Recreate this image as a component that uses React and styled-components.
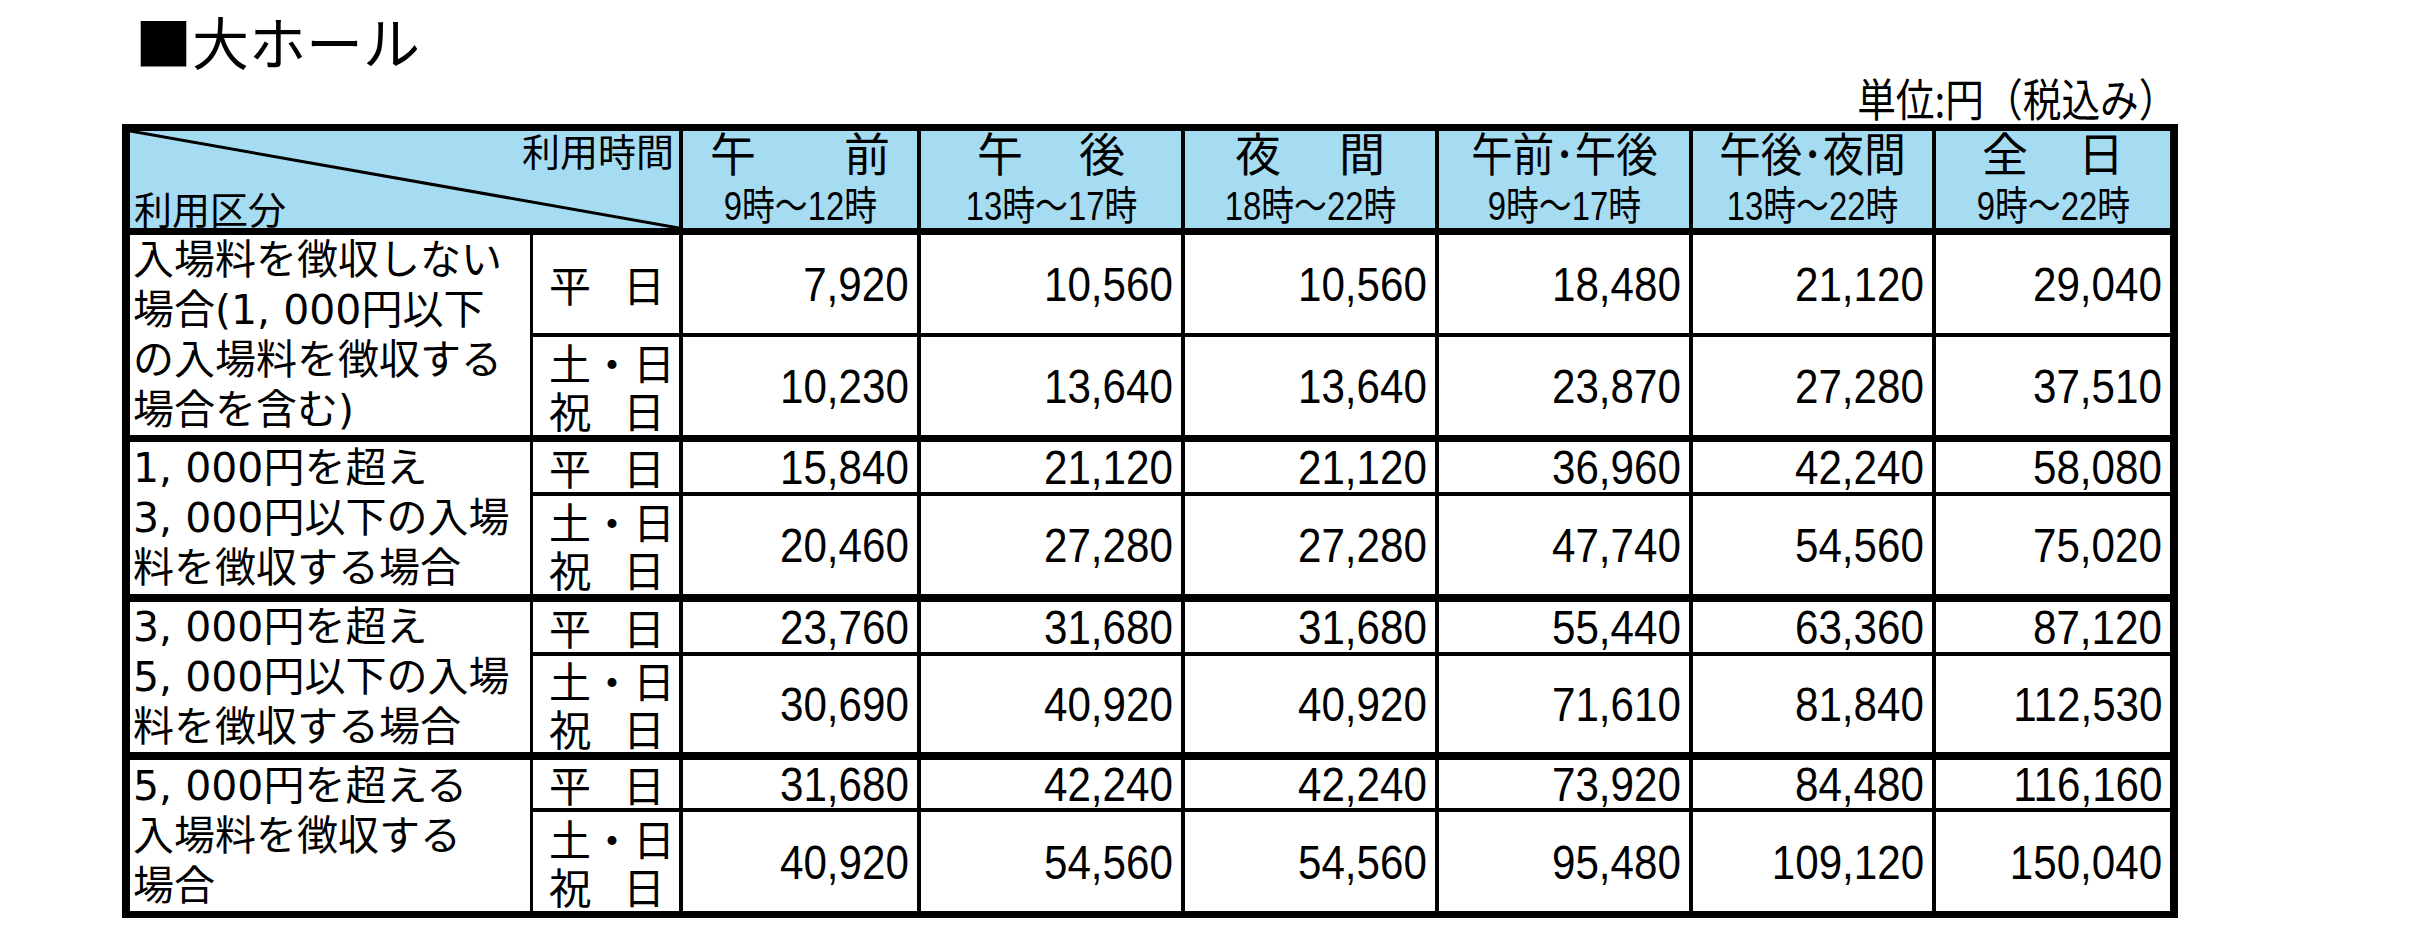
import React from "react";
import styled, { createGlobalStyle } from "styled-components";

const GlobalStyle = createGlobalStyle`
  html, body {
    margin: 0;
    padding: 0;
    background: #fff;
  }
  body {
    font-family: "Noto Sans CJK JP", "Noto Sans", sans-serif;
    color: #000;
  }
`;

const BLUE = "#a5dcf2";

const columns = [
  { w: 238, t1: ["午", "前"], pad: 27, t2: "9時～12時" },
  { w: 264, t1: ["午", "後"], pad: 56, t2: "13時～17時" },
  { w: 254, t1: ["夜", "間"], pad: 50, t2: "18時～22時" },
  { w: 254, t1: "午前･午後", t2: "9時～17時" },
  { w: 243, t1: "午後･夜間", t2: "13時～22時" },
  { w: 242, t1: ["全", "日"], pad: 46, t2: "9時～22時" },
];

const groups = [
  {
    label: ["入場料を徴収しない", "場合(1, 000円以下", "の入場料を徴収する", "場合を含む)"],
    weekday: [7920, 10560, 10560, 18480, 21120, 29040],
    holiday: [10230, 13640, 13640, 23870, 27280, 37510],
    h: [101, 104],
    bb: 7,
  },
  {
    label: ["1, 000円を超え", "3, 000円以下の入場", "料を徴収する場合"],
    weekday: [15840, 21120, 21120, 36960, 42240, 58080],
    holiday: [20460, 27280, 27280, 47740, 54560, 75020],
    h: [54, 106],
    bb: 8,
  },
  {
    label: ["3, 000円を超え", "5, 000円以下の入場", "料を徴収する場合"],
    weekday: [23760, 31680, 31680, 55440, 63360, 87120],
    holiday: [30690, 40920, 40920, 71610, 81840, 112530],
    h: [54, 104],
    bb: 8,
  },
  {
    label: ["5, 000円を超える", "入場料を徴収する", "場合"],
    weekday: [31680, 42240, 42240, 73920, 84480, 116160],
    holiday: [40920, 54560, 54560, 95480, 109120, 150040],
    h: [52, 106],
    bb: 7,
  },
];

const Page = styled.div`
  width: 2410px;
  height: 945px;
  box-sizing: border-box;
  padding-left: 122px;
  overflow: hidden;
`;

const Title = styled.h1`
  margin: 0;
  padding: 12px 0 0 13px;
  font-size: 57px;
  line-height: 57px;
  font-weight: 400;
`;

const Unit = styled.div`
  width: 2056px;
  margin: 6px 0 3px;
  text-align: right;
  font-size: 45px;
  line-height: 46px;
`;

const Squeeze = styled.span`
  display: inline-block;
  transform: scaleX(${(p) => p.$x || 0.88});
  transform-origin: ${(p) => p.$origin || "right"} center;
  white-space: nowrap;
`;

const Table = styled.table`
  box-sizing: border-box;
  width: 2056px;
  table-layout: fixed;
  border-collapse: separate;
  border-spacing: 0;
  border-left: 8px solid #000;
  border-top: 7px solid #000;
`;

const Col = styled.col`
  width: ${(p) => p.$w}px;
`;

const Row = styled.tr`
  height: ${(p) => p.$h}px;
`;

const Cell = styled.td`
  box-sizing: border-box;
  padding: 0;
  vertical-align: middle;
  border-right: ${(p) => p.$br ?? 4}px solid #000;
  border-bottom: ${(p) => p.$bb ?? 4}px solid #000;
  background: ${(p) => (p.$head ? BLUE : "#fff")};
`;

const CornerCell = styled(Cell)`
  position: relative;
`;

const Diagonal = styled.svg`
  position: absolute;
  inset: 0;
  width: 100%;
  height: 100%;
  pointer-events: none;
`;

const CornerInner = styled.div`
  height: 97px;
  display: flex;
  flex-direction: column;
  justify-content: space-between;
  padding: 0 5px 0 4px;
  font-size: 38px;
  line-height: 42px;
`;

const CornerTop = styled.div`
  text-align: right;
  margin-top: -2px;
`;

const CornerBottom = styled.div`
  text-align: left;
  margin-bottom: -1px;
`;

const TimeHead = styled.div`
  height: 97px;
  display: flex;
  flex-direction: column;
  box-sizing: border-box;
`;

const TimeName = styled.div`
  display: flex;
  justify-content: ${(p) => (p.$spread ? "space-between" : "center")};
  padding: 0 ${(p) => p.$pad || 0}px;
  font-size: 46px;
  line-height: 38px;
  margin-top: 1px;
`;

const TimeRange = styled.div`
  margin-top: 15px;
  text-align: center;
  font-family: "Liberation Sans", "Noto Sans CJK JP", sans-serif;
  font-size: 40px;
  line-height: 42px;
`;

const Label = styled.div`
  padding-left: 3px;
  font-family: "DejaVu Sans", "Noto Sans CJK JP", sans-serif;
  font-size: 41px;
  line-height: 50px;
  white-space: nowrap;
`;

const Day = styled.div`
  display: flex;
  justify-content: space-between;
  padding: 0 14px 0 16px;
  font-size: 42px;
  line-height: 48px;
`;

const Num = styled.div`
  text-align: right;
  padding-right: 8px;
  font-family: "Liberation Sans", "Arial", sans-serif;
  font-size: 49px;
  line-height: 48px;
`;

const fmt = (n) => n.toLocaleString("en-US");

function HeaderRow() {
  return (
    <Row $h={104}>
      <CornerCell colSpan={2} $head $bb={7}>
        <Diagonal viewBox="0 0 100 100" preserveAspectRatio="none">
          <line x1="0" y1="0" x2="100" y2="100" stroke="#000" strokeWidth="3" vectorEffect="non-scaling-stroke" />
        </Diagonal>
        <CornerInner>
          <CornerTop>利用時間</CornerTop>
          <CornerBottom>利用区分</CornerBottom>
        </CornerInner>
      </CornerCell>
      {columns.map((c, i) => (
        <Cell key={i} $head $bb={7} $br={i === columns.length - 1 ? 8 : 4}>
          <TimeHead>
            {Array.isArray(c.t1) ? (
              <TimeName $spread $pad={c.pad}>
                <span>{c.t1[0]}</span>
                <span>{c.t1[1]}</span>
              </TimeName>
            ) : (
              <TimeName>
                <Squeeze $x={0.9} $origin="center">{c.t1}</Squeeze>
              </TimeName>
            )}
            <TimeRange>
              <Squeeze $x={0.82} $origin="center">{c.t2}</Squeeze>
            </TimeRange>
          </TimeHead>
        </Cell>
      ))}
    </Row>
  );
}

function PriceCells({ values, bb }) {
  return values.map((v, i) => (
    <Cell key={i} $bb={bb} $br={i === values.length - 1 ? 8 : 4}>
      <Num>
        <Squeeze $x={0.86}>{fmt(v)}</Squeeze>
      </Num>
    </Cell>
  ));
}

function Group({ g }) {
  return (
    <>
      <Row $h={g.h[0]}>
        <Cell rowSpan={2} $br={3} $bb={g.bb}>
          {g.label.map((l, i) => (
            <Label key={i}>{l}</Label>
          ))}
        </Cell>
        <Cell>
          <Day>
            <span>平</span>
            <span>日</span>
          </Day>
        </Cell>
        <PriceCells values={g.weekday} bb={4} />
      </Row>
      <Row $h={g.h[1]}>
        <Cell $bb={g.bb}>
          <Day>
            <span>土</span>
            <span>・</span>
            <span>日</span>
          </Day>
          <Day>
            <span>祝</span>
            <span>日</span>
          </Day>
        </Cell>
        <PriceCells values={g.holiday} bb={g.bb} />
      </Row>
    </>
  );
}

export default function App() {
  return (
    <>
      <GlobalStyle />
      <Page>
        <Title>■大ホール</Title>
        <Unit>
          <Squeeze $x={0.86}>単位:円（税込み）</Squeeze>
        </Unit>
        <Table>
          <colgroup>
            <Col $w={403} />
            <Col $w={150} />
            {columns.map((c, i) => (
              <Col key={i} $w={c.w} />
            ))}
          </colgroup>
          <tbody>
            <HeaderRow />
            {groups.map((g, i) => (
              <Group key={i} g={g} />
            ))}
          </tbody>
        </Table>
      </Page>
    </>
  );
}
